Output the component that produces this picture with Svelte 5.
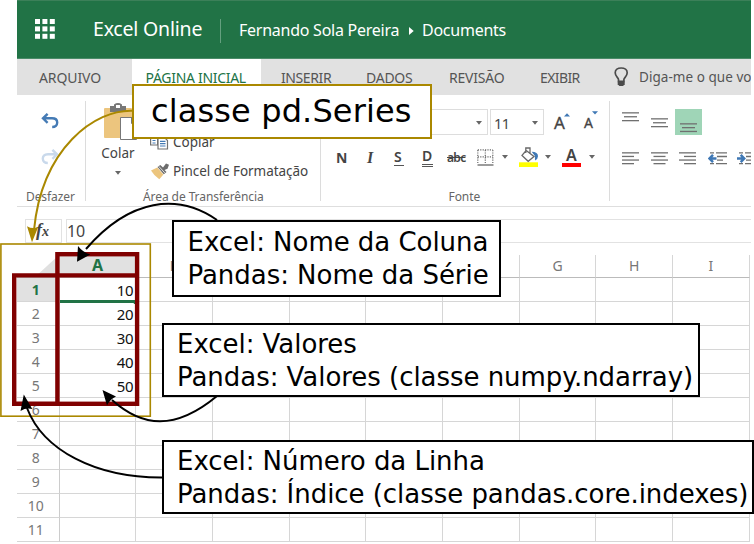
<script>
  const tabs = [
    { name: 'ARQUIVO', width: 115, inset: 22, spacing: -0.1 },
    { name: 'PÁGINA INICIAL', width: 129, inset: 13.5, active: true, spacing: -0.3 },
    { name: 'INSERIR', width: 85, inset: 20, spacing: -0.4 },
    { name: 'DADOS', width: 83, inset: 20, spacing: -0.25 },
    { name: 'REVISÃO', width: 91, inset: 20, spacing: -0.2 },
    { name: 'EXIBIR', width: 94, inset: 20, spacing: -0.6 }
  ];
  const columns = ['A', 'B', '', '', '', '', 'G', 'H', 'I'];
  const rows = Array.from({ length: 11 }, (_, i) => ({ n: i + 1, value: i < 5 ? (i + 1) * 10 : '' }));
  const notes = [
    { id: 'column', lines: ['Excel: Nome da Coluna', 'Pandas: Nome da Série'] },
    { id: 'values', lines: ['Excel: Valores', 'Pandas: Valores (classe numpy.ndarray)'] },
    { id: 'index', lines: ['Excel: Número da Linha', 'Pandas: Índice (classe pandas.core.indexes)'] }
  ];
  const vertical = [[0, 17], [2, 13], [0, 17]];
  const center = [[0, 17], [2.5, 12], [0, 17], [2.5, 12]];
  const left = [[0, 17], [0, 12], [0, 17], [0, 12]];
  const right = [[0, 17], [5, 12], [0, 17], [5, 12]];
</script>

{#snippet caret()}
  <svg class="caret" width="6" height="4" viewBox="0 0 6 4"><path d="M0 0h6L3 3.8z" fill="#666" /></svg>
{/snippet}

{#snippet bars(set, gap)}
  <svg width="17" height="14" viewBox="0 0 17 14">
    {#each set as [x, w], i}
      <rect {x} y={0.2 + i * gap} width={w} height="1.3" fill="#707070" />
    {/each}
  </svg>
{/snippet}

{#snippet indent(out)}
  <svg width="20" height="14" viewBox="0 0 20 14">
    <path d="M2 .9h4M8 .9h11M9 4.5h10M9 8.1h6M2 11.7h4M8 11.7h11" stroke="#707070" stroke-width="1.3" />
    <path d={out ? 'M8.5 6.5H1.5M5 2.9L1.5 6.5L5 10.1' : 'M0 6.5H7M3.7 2.9L7.2 6.5L3.7 10.1'} fill="none" stroke="#3f78b5" stroke-width="2.5" />
  </svg>
{/snippet}

<div class="page">
  <main>
    <header>
      <svg class="waffle" width="20" height="20" viewBox="0 0 20 20">
        {#each [0, 7.4, 14.8] as y}
          {#each [0, 7.4, 14.8] as x}<rect {x} {y} width="5" height="5" fill="#fff" />{/each}
        {/each}
      </svg>
      <span class="brand">Excel Online</span>
      <i class="divider"></i>
      <span class="crumb owner">Fernando Sola Pereira</span>
      <svg class="chevron" width="5" height="8" viewBox="0 0 5 8"><path d="M0 0L4.7 4L0 8z" fill="#fff" /></svg>
      <span class="crumb docs">Documents</span>
    </header>

    <nav>
      {#each tabs as tab}
        <span
          class="tab"
          class:active={tab.active}
          style:width="{tab.width}px"
          style:padding-left="{tab.inset}px"
          style:letter-spacing="{tab.spacing}px">{tab.name}</span>
      {/each}
      <svg class="bulb" width="15" height="20" viewBox="0 0 15 20">
        <path d="M4.5 14.3V12.5C4.5 10.7 1.2 9.4 1.2 5.8C1.2 2.8 3.8 1 7.2 1s6 1.8 6 4.8c0 3.6-3.3 4.9-3.3 6.7v1.8z" fill="none" stroke="#4b4b4b" stroke-width="1.7" />
        <path d="M3.7 14.5h7v2.8L9 19H5.4l-1.7-1.7z" fill="#4b4b4b" />
      </svg>
      <span class="tell">Diga-me o que vo</span>
    </nav>

    <section class="ribbon">
      <div class="group undo">
        <svg width="18" height="16" viewBox="0 0 18 16"><path d="M6.6 .8L2 5.3L6.6 9.8M2.5 5.3H11C15 5.3 16.2 7.5 16.2 9.5C16.2 12.3 14.4 14 11.2 14" fill="none" stroke="#457bb5" stroke-width="2.4" /></svg>
        <svg class="redo" width="18" height="16" viewBox="0 0 18 16"><path d="M11.4 .8L16 5.3L11.4 9.8M15.5 5.3H7C3 5.3 1.8 7.5 1.8 9.5C1.8 12.3 3.6 14 6.8 14" fill="none" stroke="#c9d9eb" stroke-width="2.4" /></svg>
        <span class="caption">Desfazer</span>
      </div>

      <div class="group clipboard">
        <div class="paste">
          <svg width="34" height="38" viewBox="0 0 34 38">
            <rect x="1" y="5" width="28" height="30" rx="1" fill="#ecc57e" />
            <path d="M7 3h4V1.5Q15 -1.3 19 1.5V3h4v6H7z" fill="#777" /><rect x="13" y="2" width="4" height="3" fill="#fff" />
            <path d="M17.5 14.5h12l4 4v18h-16z" fill="#fff" stroke="#777" /><path d="M28.5 14.5v6h5" fill="none" stroke="#777" />
          </svg>
          <span class="colar">Colar</span>
          {@render caret()}
        </div>
        <div class="copyline">
          <svg width="19" height="16" viewBox="0 0 19 16">
            <path d="M.6 1h7v10h-7zM8 3h6l3.5 3.5V15H8z" fill="#fff" stroke="#717171" stroke-width="1.2" />
            <path d="M2.5 4h3M2.5 6.5h3M2.5 9h3M10 7.3h5.5M10 9.6h5.5M10 12h5.5" stroke="#447ab4" stroke-width="1.2" />
          </svg>
          <span>Copiar</span>
        </div>
        <div class="painter">
          <svg width="19" height="17" viewBox="0 0 19 17">
            <path d="M0 7.5L6.3 4.5L12.4 11.5L8.3 16.2Q3.2 13 0 7.5z" fill="#ecc57e" />
            <path d="M6.5 4.1l2.8-2.2 2.7 2.5 3-4 3 1.4-1.5 4-3 1.1 2 2.2-2.7 2.1z" fill="#6c6c6c" /><path d="M7.8 3.3l6 6.6" stroke="#eee" stroke-width=".9" />
          </svg>
          <span>Pincel de Formatação</span>
        </div>
        <span class="caption">Área de Transferência</span>
      </div>

      <div class="group font">
        <div class="line top">
          <div class="combo family">{@render caret()}</div>
          <div class="combo size"><span>11</span>{@render caret()}</div>
          <span class="grow">A<svg width="6" height="4" viewBox="0 0 6 4"><path d="M0 3.6h6L3 .2z" fill="#3f78b5" /></svg></span>
          <span class="grow shrink">A<svg width="6" height="4" viewBox="0 0 6 4"><path d="M0 .2h6L3 3.6z" fill="#3f78b5" /></svg></span>
        </div>
        <div class="line styles">
          <b class="n">N</b>
          <b class="it">I</b>
          <b class="s">S</b>
          <b class="d">D</b>
          <b class="abc">abc</b>
          <svg class="border" width="17" height="17" viewBox="0 0 17 17"><path d="M.8 .8h15M.8 7.8h15M.8 1v13M8.3 1v13M15.8 1v13" stroke="#696969" stroke-width="1.2" stroke-dasharray="1.2 1.2" fill="none" /><path d="M.5 16h16" stroke="#666" stroke-width="1.3" /></svg>
          {@render caret()}
          <svg class="bucket" width="20" height="20" viewBox="0 0 20 20"><rect y="15.3" width="19" height="4.7" fill="#ff0" /><path d="M7.2 3.5L15 9.5L9.2 14.3L3 8.4zM6.8 6V1h4.2v6" fill="#fff" stroke="#686868" stroke-width="1.3" /><path d="M12.7 4.8Q19 5 19 9.3Q19 12 16 13.6L15.9 9z" fill="#3f78b5" /></svg>
          {@render caret()}
          <span class="color">A</span>
          {@render caret()}
        </div>
        <span class="caption">Fonte</span>
      </div>

      <div class="group align">
        <div class="line valign">
          <span class="v1">{@render bars(vertical, 3.9)}</span>
          <span class="v2">{@render bars(vertical, 3.9)}</span>
          <span class="v3">{@render bars(vertical, 3.8)}</span>
        </div>
        <div class="line halign">
          {@render bars(left, 3.6)}
          {@render bars(center, 3.6)}
          {@render bars(right, 3.6)}
          {@render indent(true)}
          {@render indent(false)}
        </div>
      </div>
    </section>

    <section class="formula">
      <div class="fx"><i>f</i><i class="x">x</i></div>
      <div class="entry">10</div>
    </section>

    <section class="sheet">
      <div class="row heads">
        <div class="corner"><svg width="42" height="22" viewBox="0 0 42 22"><path d="M42 0V22H18z" fill="#e0e0e0" /></svg></div>
        {#each columns as column, i}
          <div class="cell" class:selected={i === 0}>{column}</div>
        {/each}
      </div>
      {#each rows as row, r}
        <div class="row">
          <div class="number" class:selected={r === 0}>{row.n}</div>
          {#each columns as column, c}
            <div class="cell" class:chosen={r === 0 && c === 0}>{c === 0 ? row.value : ''}</div>
          {/each}
        </div>
      {/each}
    </section>
  </main>

  <svg class="overlay" width="754" height="544" viewBox="0 0 754 544">
    <rect x="133.8" y="300" width="1.6" height="4" fill="#217346" />
    <rect x=".9" y="244" width="149.4" height="172.2" fill="none" stroke="#a80" stroke-width="1.6" />
    <g fill="none" stroke="#800000" stroke-width="4.4">
      <rect x="57.4" y="254.2" width="79.7" height="149.6" />
      <path d="M139 275.4H14.2V403.8H58" />
    </g>
    <g fill="none" stroke-width="2">
      <path d="M133 110.7C95 109 42 148 34 230" stroke="#a80" />
      <path d="M217 220C178 193 130 198 86 249M217 396C175 431 142 427 112 400M163 477.5C95 478 43 450 27 408" stroke="#000" />
    </g>
    <path d="M32 242.3L27 226.2Q32.5 229.5 38.2 227z" fill="#a80" />
    <path d="M77 261.8L78 246Q83 252.5 90.3 254.6zM102.5 390L116 396.4Q109.5 399.5 107 405.5zM23.8 394.5L20.5 411Q26 407.5 32.3 409z" />
  </svg>

  <div class="note series">classe pd.Series</div>
  {#each notes as note}
    <div class="note {note.id}">
      {#each note.lines as line}<div>{line}</div>{/each}
    </div>
  {/each}
</div>

<style>
  .page { position: relative; width: 754px; height: 544px; overflow: hidden; background: #fff; color: #444; font-family: "Noto Sans", sans-serif; }
  .page * { box-sizing: border-box; }
  svg { display: block; flex: none; }
  span, b, i { white-space: nowrap; }
  main { width: 734px; height: 544px; margin-left: 17px; overflow: hidden; }
  header { display: flex; align-items: center; height: 59px; padding-left: 18px; background: #217346; border-top: 1px solid #3c8059; border-bottom: 1px solid #4a8b68; color: #fff; }
  .waffle { margin: -1px 38px 0 0; }
  .brand { flex: none; width: 110px; margin-top: -2px; font-size: 19.5px; letter-spacing: -.2px; }
  .divider { width: 1px; height: 24px; margin: 2px 18px 0 17px; background: #64a07f; }
  .crumb { flex: none; font-size: 16px; margin-top: 1px; letter-spacing: -.25px; }
  .owner { width: 162px; }
  .chevron { margin: 3px 8px 0 8px; }

  nav { display: flex; align-items: center; height: 36px; background: #e1e1e1; }
  .tab { flex: none; height: 36px; line-height: 37px; font-size: 14px; color: #555; }
  .tab.active { background: #fff; color: #217346; }
  .bulb { margin: 0 10px 0 0; }
  .tell { font-size: 13.5px; color: #555; letter-spacing: .05px; }

  .ribbon { display: flex; height: 112px; padding-top: 6px; border-bottom: 1px solid #dedede; }
  .group { position: relative; display: flex; flex: none; flex-direction: column; height: 100px; border-right: 1px solid #dcdcdc; }
  .caption { margin-top: auto; height: 17px; font-size: 12px; line-height: 17px; letter-spacing: -.08px; color: #666; margin-bottom: -4px; }
  .undo { width: 69px; padding: 12px 0 0 24px; }
  .redo { margin-top: 20px; }
  .undo .caption { margin-left: -15px; }
  .clipboard { display: grid; grid-template: 32px 28px 24px 1fr / 57px 1fr; width: 235px; padding-left: 16px; font-size: 13.5px; }
  .paste { grid-row: 1 / 4; display: flex; flex-direction: column; align-items: center; width: 57px; margin-left: -11px; padding-top: 2px; }
  .colar { margin: 3px 3px 0 0; line-height: 18px; height: 18px; }
  .paste .caret { margin: 9px 3px 0 0; }
  .copyline, .painter { display: flex; align-items: center; }
  .copyline { grid-row: 2; grid-column: 2; margin: -10px 0 0 -9px; gap: 4px; }
  .painter { grid-row: 3; grid-column: 2; margin: -4px 0 0 -8px; gap: 3px; letter-spacing: -.05px; }
  .clipboard .caption { grid-row: 4; grid-column: 1 / 3; margin-left: 41px; }
  .font { width: 289px; }
  .line { display: flex; align-items: center; flex: none; }
  .top { height: 26px; margin-top: 8px; }
  .combo { display: flex; flex: none; align-items: center; justify-content: space-between; height: 26px; border: 1px solid #ddd; padding: 2px 5px 0; font-size: 14.5px; letter-spacing: -.6px; }
  .family { width: 137px; margin-left: 30px; justify-content: flex-end; }
  .size { width: 54px; margin: 0 10px 0 2px; padding-left: 3px; }
  .grow { display: flex; flex: none; width: 30px; font: 17px "Noto Sans", sans-serif; line-height: 25px; padding-top: 1px; -webkit-text-stroke: .3px #444; }
  .grow svg { margin: 3px 0 0 -1px; }
  .shrink { width: 22px; font-size: 14px; line-height: 29px; }
  .styles { height: 24px; margin: 10px 0 0 15px; font-size: 14px; }
  .styles b { line-height: 17px; }
  .n { width: 31px; }
  .it { width: 27px; font-family: "Liberation Serif", serif; font-style: italic; font-size: 16px; }
  .s { width: 10px; margin-right: 18px; border-bottom: 1px solid #555; font-weight: 600; }
  .d { width: 11px; margin-right: 14px; border-bottom: 3px double #555; font-weight: 600; }
  .abc { width: 20px; margin-right: 10px; font-size: 12px; font-weight: 600; letter-spacing: -.7px; text-decoration: line-through; }
  .styles .caret { margin-left: 8px; }
  .bucket { margin: 0 0 0 11px; }
  .styles .bucket + .caret { margin-left: 6px; }
  .color { width: 19px; height: 19px; margin: 0 0 0 11px; border-bottom: 4px solid red; text-align: center; font-size: 16px; font-weight: 600; line-height: 14px; }
  .font .caption { margin-left: 127.5px; }
  .align { width: 142px; border: 0; padding: 8px 0 0 12px; }
  .valign { height: 26px; align-items: flex-start; }
  .v1 { padding-top: 3px; width: 29px; }
  .v2 { padding-top: 9px; width: 24px; }
  .v3 { width: 27px; height: 26px; padding: 14px 0 0 5px; background: #9fd5b7; }
  .halign { margin-top: 17px; gap: 11.7px; }
  .halign svg:last-child { margin-left: -3px; }

  .formula { display: flex; height: 48px; padding: 12px 0; }
  .fx, .entry { height: 24px; border: 1px solid #e2e2e2; line-height: 22px; }
  .fx { width: 37px; margin-left: 8px; padding-left: 10px; font: bold 18px/20px "Liberation Serif", serif; }
  .x { font-size: 14px; }
  .entry { flex: 1; margin-left: 4px; border-right: 0; font-size: 16px; letter-spacing: -.2px; padding-left: 0; }

  .sheet { width: 734px; }
  .row { display: flex; height: 24px; }
  .corner, .number { flex: none; width: 42.5px; border-right: 1px solid #ccc; }
  .cell { flex: none; width: 76.7px; border-right: 1px solid #d6d6d6; border-bottom: 1px solid #d6d6d6; text-align: right; padding-right: 2px; font-size: 15px; line-height: 24px; letter-spacing: -.3px; color: #111; }
  .number { border-bottom: 1px solid #d6d6d6; text-align: center; font-size: 14px; line-height: 24px; color: #777; padding-right: 4px; }
  .number.selected, .heads .selected { background: #e1e1e1; color: #217346; font-weight: 700; }
  .heads { height: 23px; }
  .heads .cell { text-align: center; font-size: 14px; line-height: 21px; border-bottom-color: #bbb; color: #777; padding: 0; }
  .heads .selected { color: #217346; font-size: 16px; }
  .corner { border-bottom: 1px solid #bbb; }
  .chosen { box-shadow: inset 0 -1px #217346, 0 1px #217346; border-bottom-color: #217346; border-right-color: #fff; }

  .overlay { position: absolute; inset: 0; }
  .note { position: absolute; background: #fff; border: 2px solid #000; color: #000; font: 26px/32.5px "DejaVu Sans", sans-serif; letter-spacing: -.04px; white-space: pre; padding-left: 13px; }
  .series { left: 132px; top: 84px; width: 300px; height: 55px; border-color: #a80; font-size: 32px; line-height: 51px; letter-spacing: .13px; padding-left: 17px; }
  .column { left: 172px; top: 220px; width: 329px; height: 77px; padding-top: 4px; padding-left: 13.5px; }
  .values { left: 162px; top: 323px; width: 538px; height: 74px; padding-top: 3px; }
  .index { left: 162px; top: 440px; width: 592px; height: 74px; padding-top: 3px; }
</style>
